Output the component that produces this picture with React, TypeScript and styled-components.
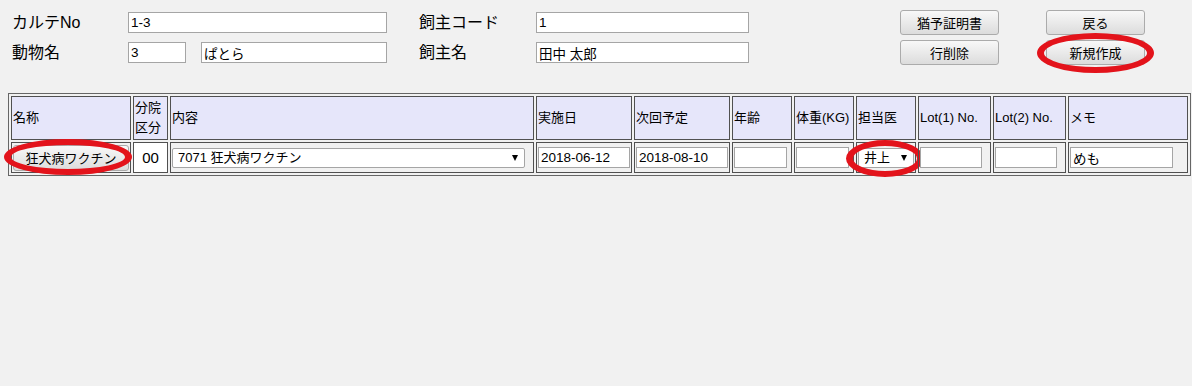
import React from "react";
import styled, { createGlobalStyle } from "styled-components";

const GlobalStyle = createGlobalStyle`
  html, body {
    margin: 0;
    background: #f1f1f1;
  }
  body {
    font-family: "Liberation Sans", "Noto Sans CJK JP", sans-serif;
    color: #000;
  }
`;

const FONT = `"Liberation Sans", "Noto Sans CJK JP", sans-serif`;

const Page = styled.main`
  width: 1192px;
  height: 386px;
  background: #f1f1f1;
  overflow: hidden;
`;

const TopBar = styled.div`
  display: flex;
  align-items: flex-start;
  padding: 10px 0 0 12px;
`;

const FieldGrid = styled.div<{ $cols: string; $offset?: number }>`
  display: grid;
  grid-template-columns: ${p => p.$cols};
  grid-auto-rows: 25px;
  row-gap: 5px;
  align-items: center;
  margin-left: ${p => p.$offset ?? 0}px;
`;

const Label = styled.span`
  font-size: 16px;
  line-height: 25px;
`;

const InputPair = styled.div`
  display: flex;
  gap: 15px;
`;

const TextInput = styled.input<{ $w?: number }>`
  box-sizing: border-box;
  width: ${p => (p.$w ? `${p.$w}px` : "100%")};
  height: 21px;
  margin: 0;
  padding: 0 2px;
  border: 1px solid #a5a5a5;
  background: #fff;
  font: 13.5px ${FONT};
  color: #000;
  outline: none;
  vertical-align: middle;
`;

const ButtonGrid = styled.div`
  display: grid;
  grid-template-columns: 99px 99px;
  grid-auto-rows: 25px;
  column-gap: 47px;
  row-gap: 5px;
  margin-left: 151px;
`;

const Button = styled.button<{ $full?: boolean }>`
  box-sizing: border-box;
  width: ${p => (p.$full ? "100%" : "99px")};
  height: ${p => (p.$full ? "26px" : "25px")};
  margin: 0;
  padding: 0;
  border: 1px solid #ababab;
  border-radius: 3px;
  background: linear-gradient(#f8f8f8, #dcdcdc);
  font: 13px ${FONT};
  color: #000;
  vertical-align: middle;
`;

const Anchor = styled.span`
  position: relative;
  display: block;
`;

// hand-drawn red annotation rings over the screenshot
const Ring = styled.span<{ $l: number; $t: number; $w: number; $h: number }>`
  position: absolute;
  left: ${p => p.$l}px;
  top: ${p => p.$t}px;
  width: ${p => p.$w}px;
  height: ${p => p.$h}px;
  box-sizing: border-box;
  border: 7px solid #e3131b;
  border-top-width: 6px;
  border-bottom-width: 6px;
  border-radius: 50%;
  pointer-events: none;
`;

const Table = styled.table`
  margin: 28px 0 0 8px;
  width: 1183px;
  table-layout: fixed;
  border-collapse: separate;
  border-spacing: 2px;
  border: 1px solid #666;
  font-size: 13px;
`;

const HeadCell = styled.th<{ $w: number }>`
  box-sizing: border-box;
  width: ${p => p.$w}px;
  padding: 1px;
  border: 1px solid #505050;
  background: #e6e6fa;
  font-weight: normal;
  text-align: left;
  vertical-align: middle;
  line-height: 20px;
`;

const Cell = styled.td<{ $white?: boolean }>`
  position: relative;
  height: 27px;
  padding: 1px;
  border: 1px solid #505050;
  background: ${p => (p.$white ? "#fff" : "transparent")};
  text-align: ${p => (p.$white ? "center" : "left")};
  font-size: ${p => (p.$white ? "15px" : "13px")};
  vertical-align: middle;
`;

const SelectWrap = styled.span<{ $w: number }>`
  position: relative;
  display: inline-block;
  width: ${p => p.$w}px;
  height: 20px;
  vertical-align: middle;

  &::after {
    content: "";
    position: absolute;
    right: 7px;
    top: 7px;
    border-left: 3px solid transparent;
    border-right: 3px solid transparent;
    border-top: 6px solid #000;
    pointer-events: none;
  }
`;

const Select = styled.select`
  appearance: none;
  box-sizing: border-box;
  width: 100%;
  height: 100%;
  margin: 0;
  padding: 0 0 0 5px;
  border: 1px solid #a5a5a5;
  border-radius: 2px;
  background: #fff;
  font: 13px ${FONT};
  color: #000;
  outline: none;
`;

const columns: { label: React.ReactNode; w: number }[] = [
  { label: "名称", w: 120 },
  { label: <>分院<br />区分</>, w: 35 },
  { label: "内容", w: 364 },
  { label: "実施日", w: 96 },
  { label: "次回予定", w: 96 },
  { label: "年齢", w: 60 },
  { label: "体重(KG)", w: 60 },
  { label: "担当医", w: 60 },
  { label: "Lot(1) No.", w: 73 },
  { label: "Lot(2) No.", w: 73 },
  { label: "メモ", w: 120 },
];

const App = () => {
  return (
    <Page>
      <GlobalStyle />
      <TopBar>
        <FieldGrid $cols="116px 259px">
          <Label>カルテNo</Label>
          <TextInput defaultValue="1-3" />
          <Label>動物名</Label>
          <InputPair>
            <TextInput $w={58} defaultValue="3" />
            <TextInput $w={186} defaultValue="ぱとら" />
          </InputPair>
        </FieldGrid>
        <FieldGrid $cols="117px 213px" $offset={32}>
          <Label>飼主コード</Label>
          <TextInput defaultValue="1" />
          <Label>飼主名</Label>
          <TextInput defaultValue="田中 太郎" />
        </FieldGrid>
        <ButtonGrid>
          <Button>猶予証明書</Button>
          <Button>戻る</Button>
          <Button>行削除</Button>
          <Anchor>
            <Button>新規作成</Button>
            <Ring $l={-9} $t={-7} $w={117} $h={40} />
          </Anchor>
        </ButtonGrid>
      </TopBar>

      <Table>
        <thead>
          <tr>
            {columns.map((c, i) => (
              <HeadCell key={i} $w={c.w}>
                {c.label}
              </HeadCell>
            ))}
          </tr>
        </thead>
        <tbody>
          <tr>
            <Cell>
              <Button $full>狂犬病ワクチン</Button>
              <Ring $l={-8} $t={-4} $w={128} $h={36} />
            </Cell>
            <Cell $white>00</Cell>
            <Cell>
              <SelectWrap $w={353}>
                <Select defaultValue="7071">
                  <option value="7071">7071 狂犬病ワクチン</option>
                </Select>
              </SelectWrap>
            </Cell>
            <Cell>
              <TextInput defaultValue="2018-06-12" />
            </Cell>
            <Cell>
              <TextInput defaultValue="2018-08-10" />
            </Cell>
            <Cell>
              <TextInput $w={53} />
            </Cell>
            <Cell>
              <TextInput $w={53} />
            </Cell>
            <Cell>
              <SelectWrap $w={56}>
                <Select defaultValue="inoue">
                  <option value="inoue">井上</option>
                </Select>
              </SelectWrap>
              <Ring $l={-11} $t={-3} $w={78} $h={37} />
            </Cell>
            <Cell>
              <TextInput $w={62} />
            </Cell>
            <Cell>
              <TextInput $w={62} />
            </Cell>
            <Cell>
              <TextInput $w={103} defaultValue="めも" />
            </Cell>
          </tr>
        </tbody>
      </Table>
    </Page>
  );
};

export default App;
